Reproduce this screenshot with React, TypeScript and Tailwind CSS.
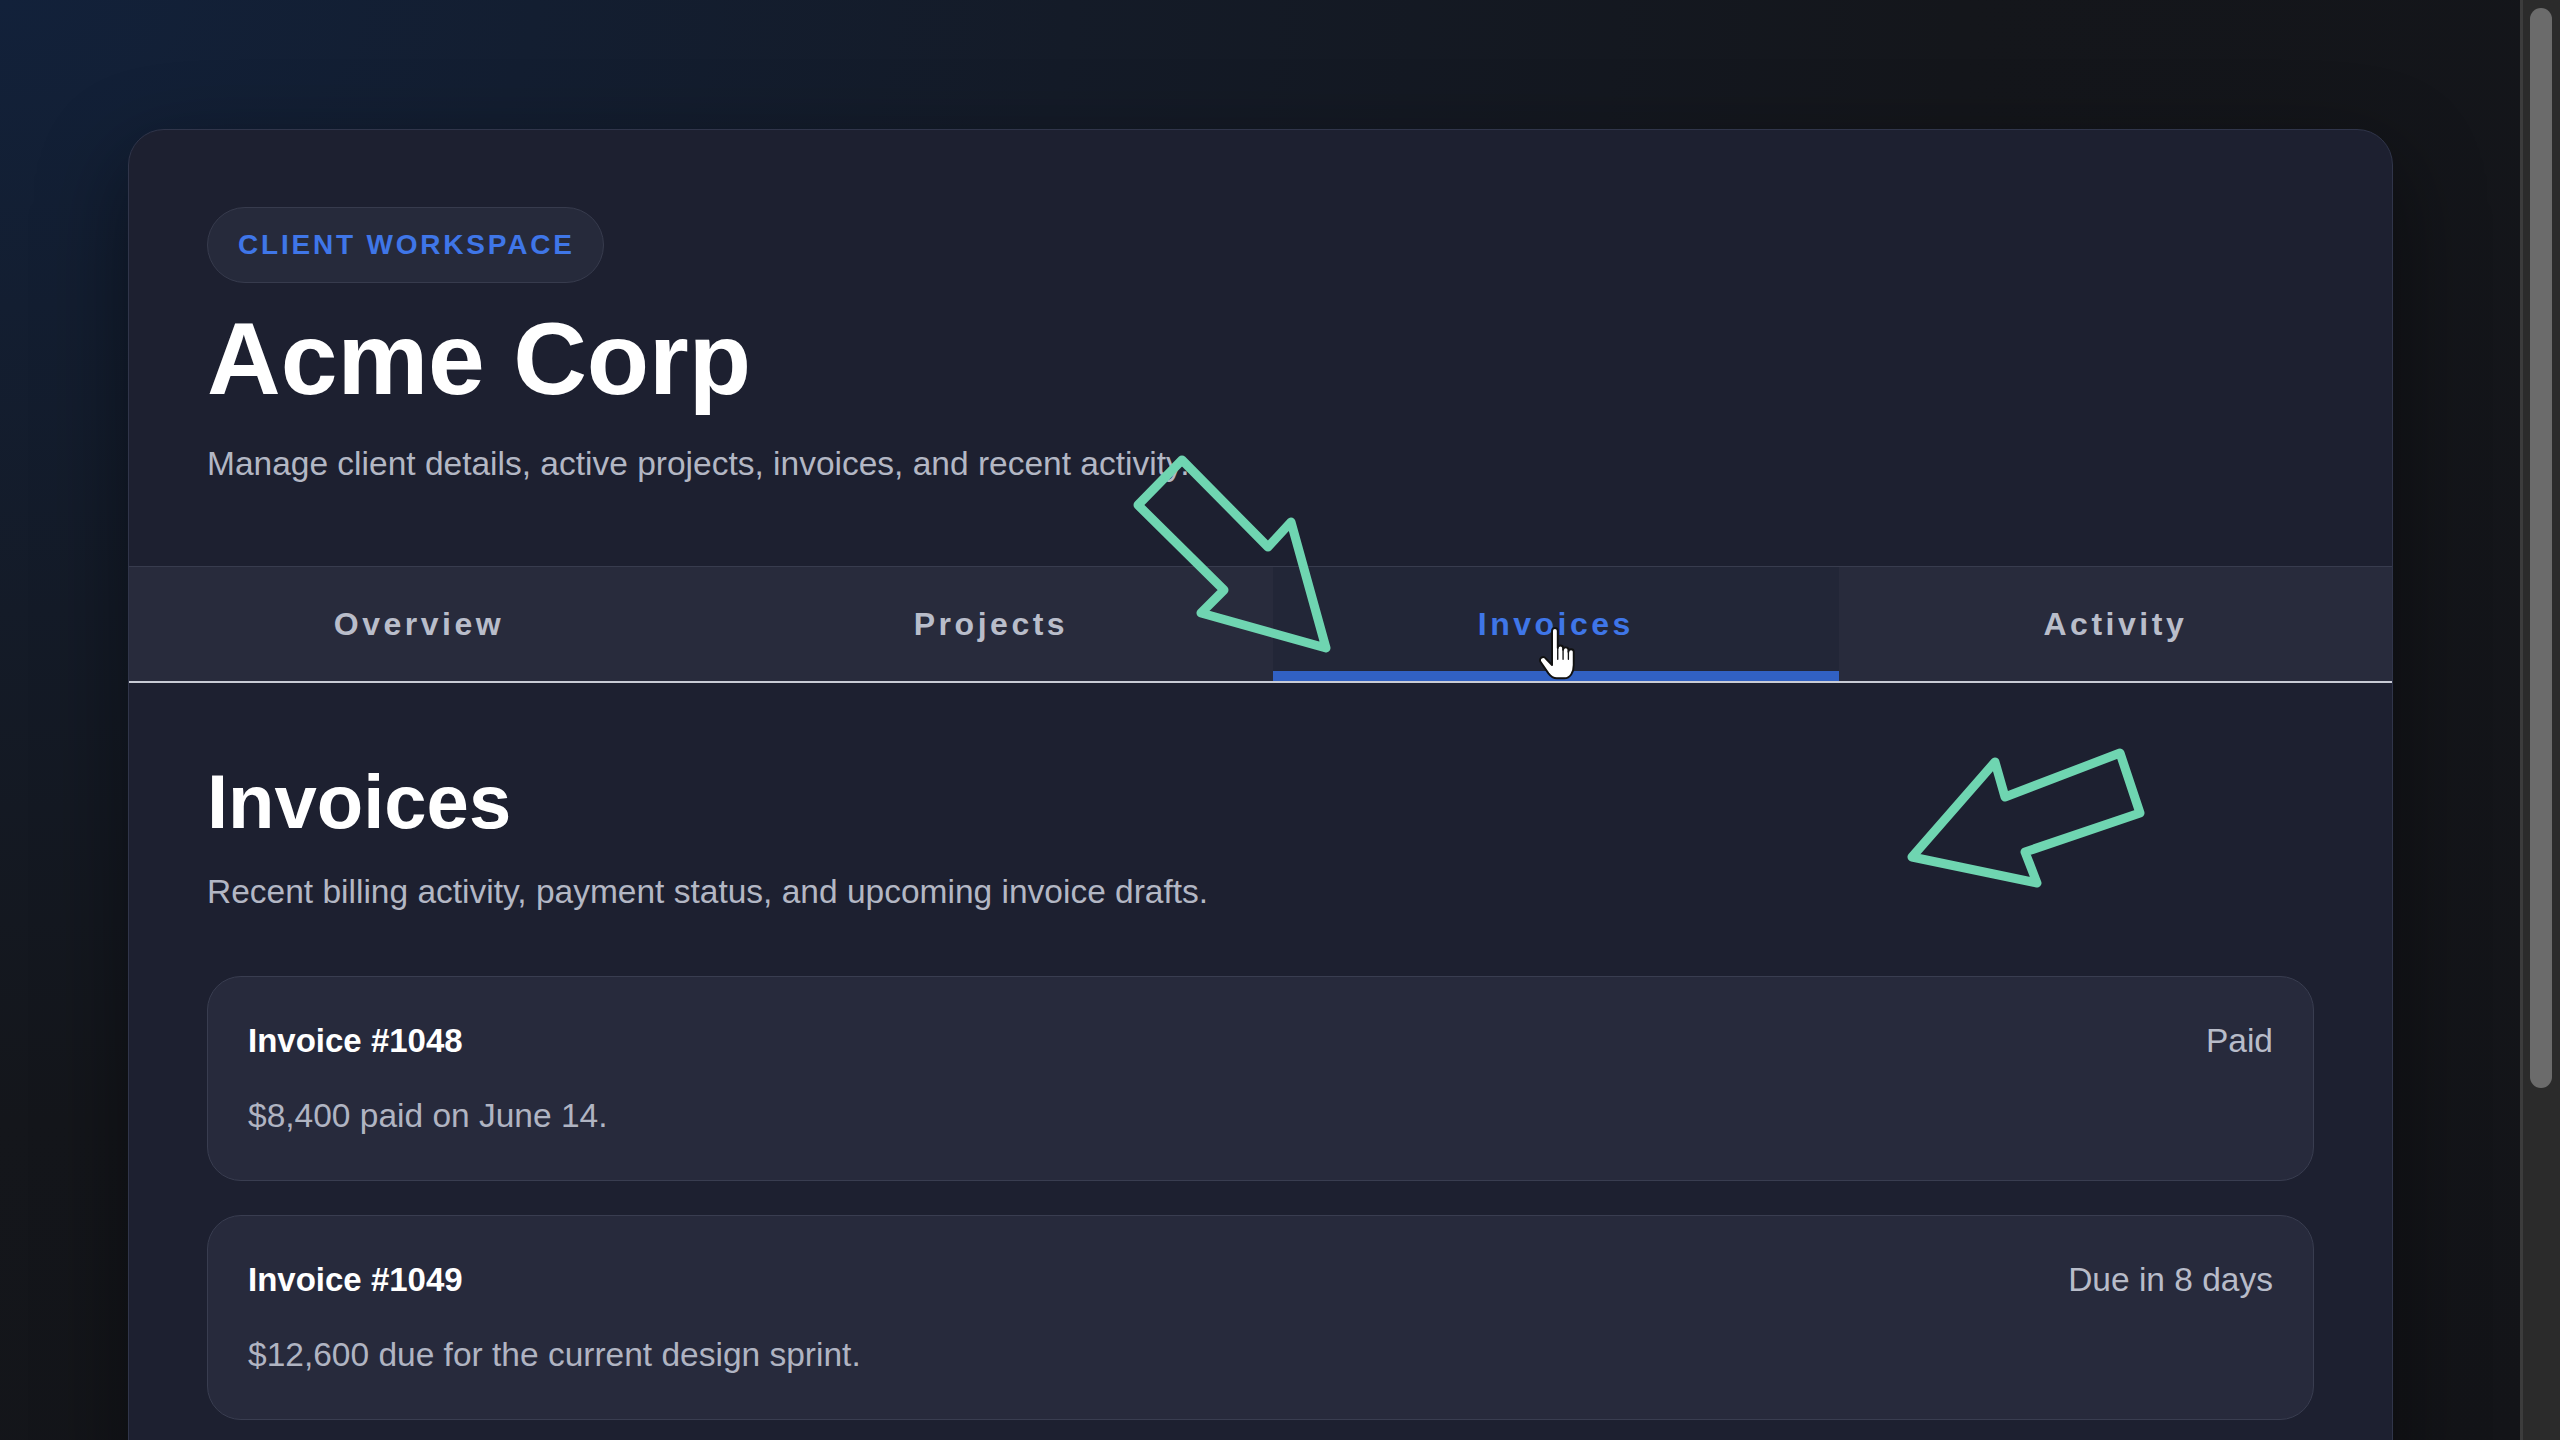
import React from 'react';

type Invoice = { id: string; note: string; status: string };

const invoices: Invoice[] = [
  { id: 'Invoice #1048', note: '$8,400 paid on June 14.', status: 'Paid' },
  { id: 'Invoice #1049', note: '$12,600 due for the current design sprint.', status: 'Due in 8 days' },
];

const tabs = ['Overview', 'Projects', 'Invoices', 'Activity'];

// Annotation layer: hand-drawn arrows + pointer cursor sitting over the page
const Annotations: React.FC = () => (
  <svg
    className="pointer-events-none absolute inset-0"
    width="2520"
    height="1440"
    viewBox="0 0 2520 1440"
    fill="none"
  >
    <g stroke="#6fd5b1" strokeWidth="9" strokeLinejoin="round" strokeLinecap="round">
      <polygon points="1182,460 1268,547 1291,522 1326,648 1201,613 1224,590 1138,505" />
      <polygon points="1912,857 1995,762 2005,797 2120,753 2140,813 2025,852 2037,883" />
    </g>
    <g transform="translate(1534 627) scale(1.9)">
      <path
        d="M9.5 2C9.5 1 10.2 0.5 11 0.5C11.8 0.5 12.5 1 12.5 2L12.5 11C12.5 10.2 13.1 9.7 13.9 9.7C14.7 9.7 15.3 10.2 15.3 11L15.3 12C15.3 11.2 15.9 10.7 16.7 10.7C17.5 10.7 18.1 11.2 18.1 12L18.1 13C18.1 12.2 18.7 11.7 19.5 11.7C20.3 11.7 20.9 12.2 20.9 13L20.9 20C20.9 24 19 27 16 27L12 27C10 27 8.8 26 7.6 24.4L3.5 18.5C2.9 17.6 3.1 16.6 3.9 16.1C4.7 15.6 5.7 15.9 6.3 16.7L9.5 20Z"
        fill="#ffffff"
        stroke="#111111"
        strokeWidth="1"
        strokeLinejoin="round"
      />
      <path d="M15.3 12L15.3 17M18.1 13L18.1 17M12.5 11L12.5 17" stroke="#111111" strokeWidth="0.7" strokeLinecap="round" />
    </g>
  </svg>
);

const App: React.FC = () => {
  const active = 'Invoices';

  return (
    <div className="flex h-screen w-full overflow-hidden bg-[#14161b] font-['Liberation_Sans',Arial,sans-serif]">
      {/* Page */}
      <main className="relative flex-1 overflow-hidden bg-[radial-gradient(ellipse_at_0%_0%,#12213a_0%,#141b28_30%,#14161b_55%,#131418_100%)] pl-[128px] pr-[127px] pt-[129px]">
        <section className="rounded-[36px] border border-[#30354a] bg-[#1d2030] shadow-[0_30px_90px_rgba(0,0,0,0.45)]">
          {/* Header */}
          <header className="px-[78px] pb-[78px] pt-[77px]">
            <span className="flex h-[76px] w-fit items-center rounded-full border border-[#373b4d] bg-[#262a3b] pl-[30px] pr-[28px] text-[28px] font-bold uppercase tracking-[0.1em] text-[#3f76e8]">
              Client Workspace
            </span>
            <h1 className="mt-[20px] text-[102px] font-bold leading-[112px] text-white">Acme Corp</h1>
            <p className="mt-[25px] text-[33.5px] leading-[48px] text-[#b3b7c4]">
              Manage client details, active projects, invoices, and recent activity.
            </p>
          </header>

          {/* Tabs */}
          <nav className="flex border-t border-b-2 border-[#383c4e] border-b-[#c8cbd5] bg-[#282b3c]">
            {tabs.map((tab) => (
              <button
                key={tab}
                className={
                  tab === active
                    ? 'h-[114px] flex-auto bg-[#222637] text-[32px] font-bold tracking-[0.11em] text-[#3f76e8] shadow-[inset_0_-10px_0_#3161c4]'
                    : 'h-[114px] flex-auto text-[32px] font-bold tracking-[0.11em] text-[#b9bdca]'
                }
              >
                {tab}
              </button>
            ))}
          </nav>

          {/* Invoices panel */}
          <div className="px-[78px] pb-[78px] pt-[77px]">
            <h2 className="text-[76px] font-bold leading-[84px] text-white">Invoices</h2>
            <p className="mt-[24px] text-[33.5px] leading-[48px] text-[#b3b7c4]">
              Recent billing activity, payment status, and upcoming invoice drafts.
            </p>
            <div className="mt-[60px] flex flex-col gap-[34px]">
              {invoices.map((inv) => (
                <div
                  key={inv.id}
                  className="rounded-[34px] border border-[#393d50] bg-[#272a3c] px-[40px] pb-[44px] pt-[44px]"
                >
                  <div className="flex items-baseline justify-between">
                    <span className="text-[33px] font-bold leading-[40px] text-white">{inv.id}</span>
                    <span className="text-[33.5px] leading-[40px] text-[#b8bcc9]">{inv.status}</span>
                  </div>
                  <p className="mt-[35px] text-[33.5px] leading-[40px] text-[#b0b4c2]">{inv.note}</p>
                </div>
              ))}
            </div>
          </div>
        </section>

        <Annotations />
      </main>

      {/* Browser scrollbar */}
      <div className="flex w-[40px] border-l-[3px] border-[#3c3c3c] bg-[#2b2b2b] pl-[7px] pt-[8px]">
        <div className="h-[1080px] w-[22px] rounded-full bg-[#6b6b6b]" />
      </div>
    </div>
  );
};

export default App;
